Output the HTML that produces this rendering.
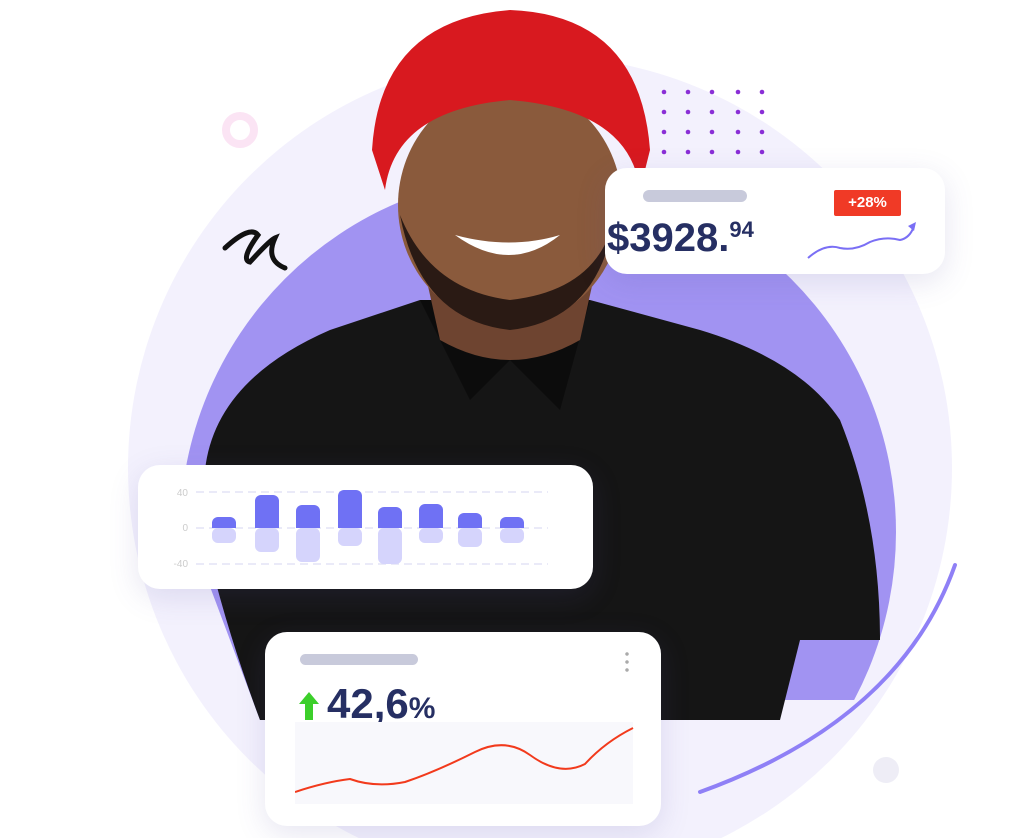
<!DOCTYPE html>
<html style="height:838px;overflow:hidden"><head><style>
body{margin:0;width:1010px;height:838px;background:#fff;overflow:hidden;position:relative;font-family:"Liberation Sans",sans-serif}
.card{position:absolute;background:#fff;border-radius:22px;box-shadow:0 8px 30px rgba(90,80,160,.15)}
</style></head><body>
<svg width="1010" height="838" style="position:absolute;left:0;top:0">
<defs><clipPath id="c"><path d="M0 0 H1010 V700 H700 L640 720 H260 L200 560 L0 560Z"/></clipPath></defs>
<circle cx="540" cy="468" r="412" fill="#f3f1fd"/>
<circle cx="538" cy="532" r="358" fill="#a193f2" clip-path="url(#c)"/>
<circle cx="240" cy="130" r="14" fill="none" stroke="#fbe4f4" stroke-width="8"/>
<circle cx="886" cy="770" r="13" fill="#eeedf6"/>
<path d="M955 565 Q900 720 700 792" fill="none" stroke="#8f80f6" stroke-width="4" stroke-linecap="round"/>
<g fill="#8a2fd6">
<g id="r"><circle cx="664" cy="92" r="2.3"/><circle cx="688" cy="92" r="2.3"/><circle cx="712" cy="92" r="2.3"/><circle cx="738" cy="92" r="2.3"/><circle cx="762" cy="92" r="2.3"/></g>
<use href="#r" y="20"/><use href="#r" y="40"/><use href="#r" y="60"/>
</g>
<path d="M225 248 Q250 225 258 235 Q240 260 250 262 Q270 240 275 238 Q265 260 285 268" fill="none" stroke="#111" stroke-width="5" stroke-linecap="round"/>
<path d="M205 470 Q215 380 330 330 L420 300 L500 330 L590 300 L700 330 Q800 360 840 420 Q880 520 880 640 L800 640 L780 720 L260 720 Q230 640 210 560 Z" fill="#151515"/>
<path d="M420 300 L470 400 L510 360 L560 410 L590 300" fill="#0c0c0c"/>
<path d="M420 250 L440 340 Q510 380 580 340 L600 250 Z" fill="#6e4430"/>
<ellipse cx="510" cy="205" rx="112" ry="120" fill="#8a5a3c"/>
<path d="M400 215 Q420 320 510 330 Q600 320 615 215 Q600 290 510 300 Q430 290 400 215Z" fill="#2a1a14"/>
<path d="M455 235 Q510 275 560 235 Q510 250 455 235Z" fill="#fff"/>
<path d="M372 150 Q380 20 510 10 Q640 15 650 150 L640 190 Q630 110 510 100 Q395 110 385 190 Z" fill="#d8191f"/>
</svg>

<div class="card" style="left:605px;top:168px;width:340px;height:106px">
<div style="position:absolute;left:38px;top:22px;width:104px;height:12px;border-radius:6px;background:#c8cadb"></div>
<div style="position:absolute;left:2px;top:48px;font-size:40px;font-weight:bold;color:#262f63">$3928.<span style="font-size:22px;vertical-align:14px">94</span></div>
<div style="position:absolute;left:229px;top:22px;width:67px;height:26px;background:#f03a26;color:#fff;font-size:15px;font-weight:bold;text-align:center;line-height:26px;border-radius:2px">+28%</div>
<svg style="position:absolute;left:195px;top:50px" width="120" height="50"><path d="M8 40 Q25 25 40 30 Q55 33 70 24 Q85 18 100 22 Q110 20 114 8" fill="none" stroke="#7a6ff5" stroke-width="2"/><path d="M108 8 L116 4 L114 13Z" fill="#7a6ff5"/></svg>
</div>

<div class="card" style="left:138px;top:465px;width:455px;height:124px">
<svg width="455" height="124" style="position:absolute;left:0;top:0">
<g font-size="10" fill="#ccc" text-anchor="end"><text x="50" y="31">40</text><text x="50" y="66">0</text><text x="50" y="102">-40</text></g>
<g stroke="#e3e4f5" stroke-dasharray="8 5" stroke-width="1.5"><line x1="58" y1="27" x2="410" y2="27"/><line x1="58" y1="63" x2="410" y2="63"/><line x1="58" y1="99" x2="410" y2="99"/></g>
<g fill="#d5d4fc"><rect x="74" y="63" width="24" height="15" rx="6"/><rect x="117" y="63" width="24" height="24" rx="6"/><rect x="158" y="63" width="24" height="34" rx="6"/><rect x="200" y="63" width="24" height="18" rx="6"/><rect x="240" y="63" width="24" height="36" rx="6"/><rect x="281" y="63" width="24" height="15" rx="6"/><rect x="320" y="63" width="24" height="19" rx="6"/><rect x="362" y="63" width="24" height="15" rx="6"/></g>
<g fill="#6f71f4"><path d="M74 63 V58 a6 6 0 0 1 6 -6 h12 a6 6 0 0 1 6 6 V63Z"/><path d="M117 63 V36 a6 6 0 0 1 6 -6 h12 a6 6 0 0 1 6 6 V63Z"/><path d="M158 63 V46 a6 6 0 0 1 6 -6 h12 a6 6 0 0 1 6 6 V63Z"/><path d="M200 63 V31 a6 6 0 0 1 6 -6 h12 a6 6 0 0 1 6 6 V63Z"/><path d="M240 63 V48 a6 6 0 0 1 6 -6 h12 a6 6 0 0 1 6 6 V63Z"/><path d="M281 63 V45 a6 6 0 0 1 6 -6 h12 a6 6 0 0 1 6 6 V63Z"/><path d="M320 63 V54 a6 6 0 0 1 6 -6 h12 a6 6 0 0 1 6 6 V63Z"/><path d="M362 63 V58 a6 6 0 0 1 6 -6 h12 a6 6 0 0 1 6 6 V63Z"/></g>
</svg>
</div>

<div class="card" style="left:265px;top:632px;width:396px;height:194px">
<div style="position:absolute;left:35px;top:22px;width:118px;height:11px;border-radius:6px;background:#c8cadb"></div>
<div style="position:absolute;left:360px;top:18px;width:4px;height:24px;background:radial-gradient(circle,#aaa 1.5px,transparent 2px) 0 0/4px 8px"></div>
<svg style="position:absolute;left:33px;top:58px" width="22" height="32"><path d="M11 2 L21 14 L15 14 L15 30 L7 30 L7 14 L1 14Z" fill="#3ccf2a"/></svg>
<div style="position:absolute;left:62px;top:48px;font-size:42px;font-weight:bold;color:#262f63">42,6<span style="font-size:30px">%</span></div>
<svg style="position:absolute;left:30px;top:90px" width="340" height="82"><rect x="0" y="0" width="338" height="82" fill="#f8f8fc"/><path d="M0 70 Q30 60 55 57 Q80 66 110 60 Q140 50 180 30 Q210 15 235 33 Q265 55 290 42 Q310 20 338 6" fill="none" stroke="#f23a1c" stroke-width="2"/></svg>
</div>
</body></html>
